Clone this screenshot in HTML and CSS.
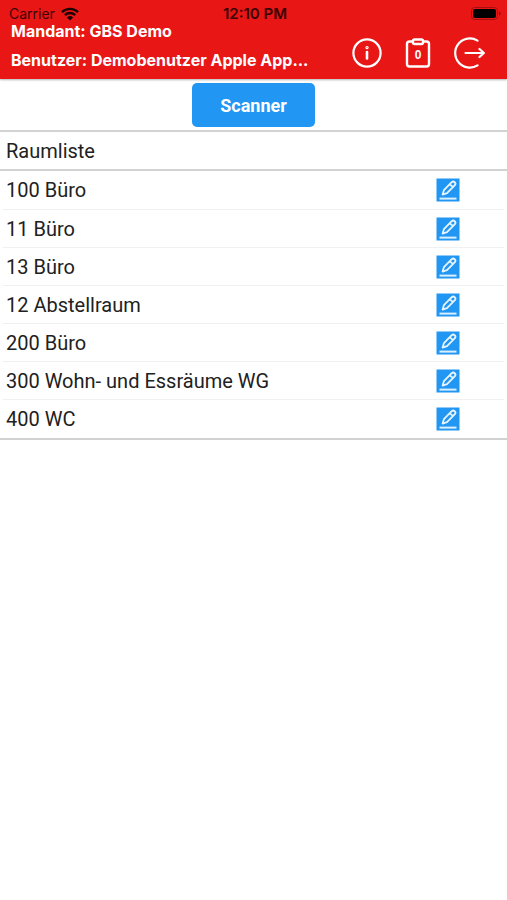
FILE: index.html
```html
<!DOCTYPE html>
<html lang="de">
<head>
    <meta charset="UTF-8">
    <meta name="viewport" content="width=device-width, initial-scale=1.0">
    <title>Raumliste</title>
    <link rel="stylesheet" href="styles.css">
</head>
<body>
    <!-- shared icon for the room rows -->
    <svg class="sprite" width="0" height="0" aria-hidden="true">
        <symbol id="icon-edit" viewBox="0 0 24 24">
            <rect x="0.5" y="0.5" width="23" height="23" fill="#2196f3"/>
            <path d="M3.5 20.6h17" stroke="#d9f0ff" stroke-width="2" fill="none"/>
            <path d="M6.6 16.6l1.3-4.4 7.8-8q1.5-1.3 3 0t.2 3l-7.9 8zM13.800 6.200l3.200 3" stroke="#e6f5ff" stroke-width="1.8" fill="none" stroke-linejoin="round"/>
        </symbol>
    </svg>

    <header class="header">
        <div class="status-bar">
            <div class="carrier">
                <span>Carrier</span>
                <svg width="18" height="14" viewBox="0 0 18 14" aria-hidden="true">
                    <path d="M1 5.2a11.3 11.3 0 0 1 16 0M3.9 8.1a7.2 7.2 0 0 1 10.2 0" fill="none" stroke="currentColor" stroke-width="2.4"/>
                    <path d="M9 13.6L5.9 10.4a4.5 4.5 0 0 1 6.2 0z" fill="currentColor"/>
                </svg>
            </div>
            <time class="clock">12:10 PM</time>
            <svg class="battery" width="30" height="14" viewBox="0 0 30 14" aria-hidden="true">
                <rect x="0.5" y="0.5" width="26" height="12" rx="3" fill="none" stroke="#a81010"/>
                <rect x="2" y="2" width="23" height="9" rx="2" fill="#000"/>
                <path d="M28 4.5q1.6 .6 1.6 2t-1.6 2z" fill="#8a0c0c"/>
            </svg>
        </div>
        <div class="header-main">
            <div class="account">
                <p>Mandant: GBS Demo</p>
                <p>Benutzer: Demobenutzer Apple App...</p>
            </div>
            <div class="actions">
                <button class="icon-btn" type="button" aria-label="Info">
                    <svg width="32" height="32" viewBox="0 0 32 32" fill="none" stroke="#fff" stroke-width="2.2" stroke-linecap="round">
                        <circle cx="16" cy="16" r="13.6"/>
                        <path d="M16 15v6.5" stroke-width="2.6"/>
                        <circle cx="16" cy="10.6" r="0.6"/>
                    </svg>
                </button>
                <button class="icon-btn" type="button" aria-label="Aufträge">
                    <svg width="32" height="32" viewBox="0 0 32 32" fill="none" stroke="#fff" stroke-width="2.4" stroke-linejoin="round">
                        <path d="M11 4.5H7.5Q5 4.5 5 7v20q0 2.5 2.5 2.5h17Q27 29.5 27 27V7q0-2.5-2.5-2.5H21"/>
                        <rect x="11" y="2.5" width="10" height="4.5" rx="1.5"/>
                        <text class="count" x="16" y="22" text-anchor="middle">0</text>
                    </svg>
                </button>
                <button class="icon-btn" type="button" aria-label="Abmelden">
                    <svg width="32" height="32" viewBox="0 0 32 32" fill="none" stroke="#fff" stroke-width="2.2" stroke-linecap="round" stroke-linejoin="round">
                        <path d="M24.5 3.6A14.6 14.6 0 1 0 24.5 28.4"/>
                        <path d="M12.5 16h18M26.5 12l4.4 4-4.4 4"/>
                    </svg>
                </button>
            </div>
        </div>
    </header>

    <main>
        <div class="toolbar">
            <button class="scanner-btn" type="button">Scanner</button>
        </div>
        <h1 class="list-title">Raumliste</h1>
        <ul class="room-list">
            <li class="room">
                <span>100 Büro</span>
                <button class="edit-btn" type="button" aria-label="100 Büro bearbeiten"><svg class="edit-icon"><use href="#icon-edit"/></svg></button>
            </li>
            <li class="room">
                <span>11 Büro</span>
                <button class="edit-btn" type="button" aria-label="11 Büro bearbeiten"><svg class="edit-icon"><use href="#icon-edit"/></svg></button>
            </li>
            <li class="room">
                <span>13 Büro</span>
                <button class="edit-btn" type="button" aria-label="13 Büro bearbeiten"><svg class="edit-icon"><use href="#icon-edit"/></svg></button>
            </li>
            <li class="room">
                <span>12 Abstellraum</span>
                <button class="edit-btn" type="button" aria-label="12 Abstellraum bearbeiten"><svg class="edit-icon"><use href="#icon-edit"/></svg></button>
            </li>
            <li class="room">
                <span>200 Büro</span>
                <button class="edit-btn" type="button" aria-label="200 Büro bearbeiten"><svg class="edit-icon"><use href="#icon-edit"/></svg></button>
            </li>
            <li class="room">
                <span>300 Wohn- und Essräume WG</span>
                <button class="edit-btn" type="button" aria-label="300 Wohn- und Essräume WG bearbeiten"><svg class="edit-icon"><use href="#icon-edit"/></svg></button>
            </li>
            <li class="room">
                <span>400 WC</span>
                <button class="edit-btn" type="button" aria-label="400 WC bearbeiten"><svg class="edit-icon"><use href="#icon-edit"/></svg></button>
            </li>
        </ul>
    </main>
</body>
</html>
```

FILE: styles.css
```css
* {
    box-sizing: border-box;
}
body {
    font-family: Roboto, sans-serif;
    margin: 0;
    background-color: #fff;
    color: #212121;
}
p, h1, ul {
    margin: 0;
    padding: 0;
}
button {
    border: none;
    padding: 0;
    cursor: pointer;
}
svg {
    display: block;
}
.sprite {
    position: absolute;
}
.header {
    background-color: #e91616;
    font-family: Inter, sans-serif;
    padding: 5px 0 10px;
    box-shadow: 0 1px 2px rgba(0, 0, 0, 0.3);
}
.status-bar {
    display: grid;
    grid-template-columns: 1fr auto 1fr;
    align-items: center;
    height: 18px;
    padding: 0 6px 0 9px;
    color: #3a0404;
    font-size: 14px;
    line-height: 18px;
}
.carrier {
    display: flex;
    align-items: center;
    gap: 6px;
}
.carrier svg {
    color: #1c0202;
}
.clock {
    font-size: 15px;
    font-weight: 600;
}
.battery {
    justify-self: end;
}
.header-main {
    display: flex;
    justify-content: space-between;
    padding: 0 22px 0 11px;
}
.account {
    display: grid;
    align-content: start;
    gap: 13px;
    padding-bottom: 1px;
    color: #fff;
    font-size: 16px;
    font-weight: 700;
    line-height: 16px;
    white-space: nowrap;
}
.actions {
    display: flex;
    align-items: flex-end;
    gap: 19px;
}
.icon-btn {
    background: none;
}
.count {
    fill: #fff;
    stroke: none;
    font-size: 12px;
    font-weight: 600;
}
.toolbar {
    display: flex;
    justify-content: center;
    padding: 4px 0 3px;
    border-bottom: 2px solid #d2d2d2;
}
.scanner-btn {
    min-width: 123px;
    height: 44px;
    border-radius: 5px;
    background-color: #2196f3;
    color: #fff;
    font-family: inherit;
    font-size: 18px;
    font-weight: 700;
}
.list-title {
    padding: 1px 6px 0;
    border-bottom: 2px solid #d2d2d2;
    font-size: 20px;
    font-weight: 400;
    line-height: 36px;
}
.room-list {
    list-style: none;
    padding: 0 3px 1px;
    border-bottom: 2px solid #d2d2d2;
}
.room {
    display: flex;
    align-items: center;
    justify-content: space-between;
    height: 38px;
    padding: 0 44px 0 3px;
    font-size: 20px;
}
.room + .room {
    border-top: 1px solid #f0f0f0;
}
.edit-btn {
    background: none;
}
.edit-icon {
    width: 24px;
    height: 24px;
}
```
